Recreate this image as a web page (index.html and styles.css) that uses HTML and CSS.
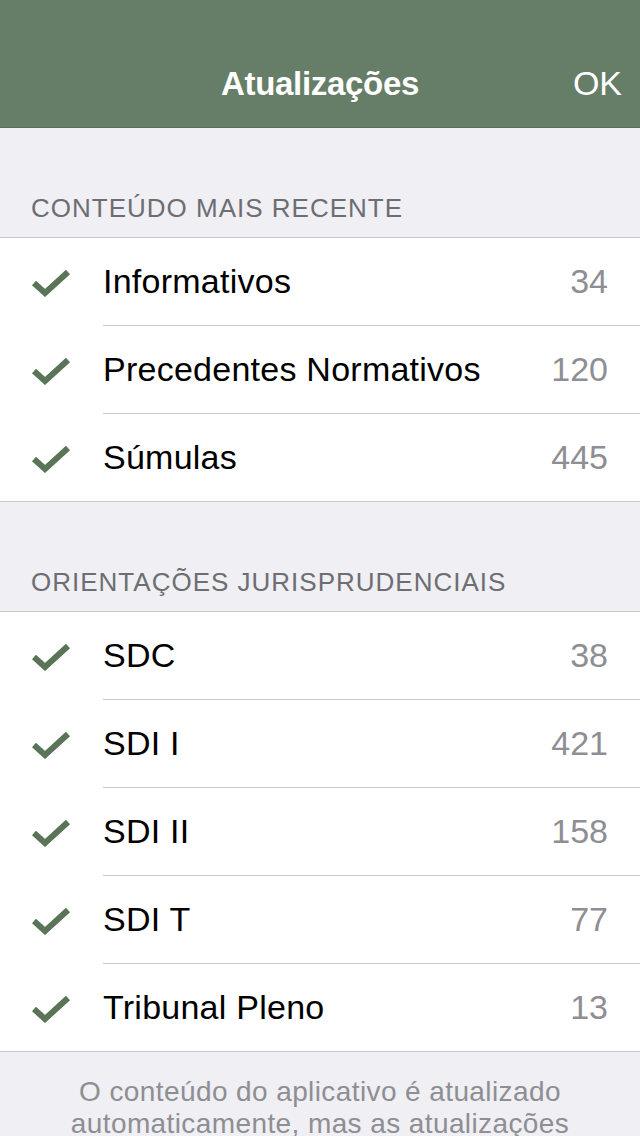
FILE: index.html
```html
<!DOCTYPE html>
<html lang="pt">
<head>
<meta charset="utf-8">
<title>Atualizações</title>
<link rel="stylesheet" href="styles.css">
</head>
<body>
<header class="navbar">
  <div class="nav-inner">
    <span class="nav-spacer"></span>
    <h1 class="nav-title">Atualizações</h1>
    <span class="nav-action">OK</span>
  </div>
</header>

<section class="group">
  <h2 class="group-header">CONTEÚDO MAIS RECENTE</h2>
  <ul class="list">
    <li class="row"><span class="check"><svg viewBox="0 0 40 30" width="40" height="30"><path d="M3 16 L14 26 L37 5" /></svg></span><span class="label">Informativos</span><span class="count">34</span></li>
    <li class="row"><span class="check"><svg viewBox="0 0 40 30" width="40" height="30"><path d="M3 16 L14 26 L37 5" /></svg></span><span class="label">Precedentes Normativos</span><span class="count">120</span></li>
    <li class="row"><span class="check"><svg viewBox="0 0 40 30" width="40" height="30"><path d="M3 16 L14 26 L37 5" /></svg></span><span class="label">Súmulas</span><span class="count">445</span></li>
  </ul>
</section>

<section class="group">
  <h2 class="group-header">ORIENTAÇÕES JURISPRUDENCIAIS</h2>
  <ul class="list">
    <li class="row"><span class="check"><svg viewBox="0 0 40 30" width="40" height="30"><path d="M3 16 L14 26 L37 5" /></svg></span><span class="label">SDC</span><span class="count">38</span></li>
    <li class="row"><span class="check"><svg viewBox="0 0 40 30" width="40" height="30"><path d="M3 16 L14 26 L37 5" /></svg></span><span class="label">SDI I</span><span class="count">421</span></li>
    <li class="row"><span class="check"><svg viewBox="0 0 40 30" width="40" height="30"><path d="M3 16 L14 26 L37 5" /></svg></span><span class="label">SDI II</span><span class="count">158</span></li>
    <li class="row"><span class="check"><svg viewBox="0 0 40 30" width="40" height="30"><path d="M3 16 L14 26 L37 5" /></svg></span><span class="label">SDI T</span><span class="count">77</span></li>
    <li class="row"><span class="check"><svg viewBox="0 0 40 30" width="40" height="30"><path d="M3 16 L14 26 L37 5" /></svg></span><span class="label">Tribunal Pleno</span><span class="count">13</span></li>
  </ul>
</section>

<p class="footer">O conteúdo do aplicativo é atualizado automaticamente, mas as atualizações</p>
</body>
</html>
```

FILE: styles.css
```css
* { box-sizing: border-box; }

html, body {
  margin: 0;
  padding: 0;
}

body {
  background: #efeff4;
  font-family: "Liberation Sans", Arial, sans-serif;
  width: 640px;
  height: 1136px;
  overflow: hidden;
}

.navbar {
  background: #667d67;
  height: 128px;
  padding-top: 40px;
  border-bottom: 1px solid #5a6d5b;
}

.nav-inner {
  height: 87px;
  display: grid;
  grid-template-columns: 1fr auto 1fr;
  align-items: center;
  color: #fff;
}

.nav-title {
  margin: 0;
  font-size: 33px;
  font-weight: bold;
  letter-spacing: -0.3px;
}

.nav-action {
  justify-self: end;
  padding-right: 18px;
  font-size: 34px;
}

.group-header {
  margin: 0;
  height: 109px;
  display: flex;
  align-items: flex-end;
  padding: 0 0 14px 31px;
  font-size: 26px;
  line-height: 30px;
  font-weight: normal;
  letter-spacing: 1px;
  color: #6d6d72;
}

.list {
  list-style: none;
  margin: 0;
  padding: 0;
  background: #fff;
  border-top: 1px solid #c8c7cc;
}

.row {
  height: 88px;
  display: flex;
  align-items: center;
  padding-left: 31px;
  position: relative;
}

.row::after {
  content: "";
  position: absolute;
  left: 103px;
  right: 0;
  bottom: 0;
  height: 1px;
  background: #c8c7cc;
}

.row:last-child::after {
  left: 0;
}

.check {
  width: 72px;
  display: flex;
  align-items: center;
}

.check svg path {
  fill: none;
  stroke: #5a7458;
  stroke-width: 6;
  stroke-linecap: butt;
  stroke-linejoin: miter;
}

.label {
  flex: 1;
  font-size: 34px;
  letter-spacing: 0.25px;
  color: #000;
  padding-bottom: 2px;
}

.count {
  font-size: 34px;
  color: #8e8e93;
  padding-right: 32px;
  padding-bottom: 2px;
}

.footer {
  margin: 0;
  padding: 24px 30px 0;
  text-align: center;
  font-size: 28px;
  line-height: 32px;
  letter-spacing: 0.4px;
  color: #8e8e93;
}
```
